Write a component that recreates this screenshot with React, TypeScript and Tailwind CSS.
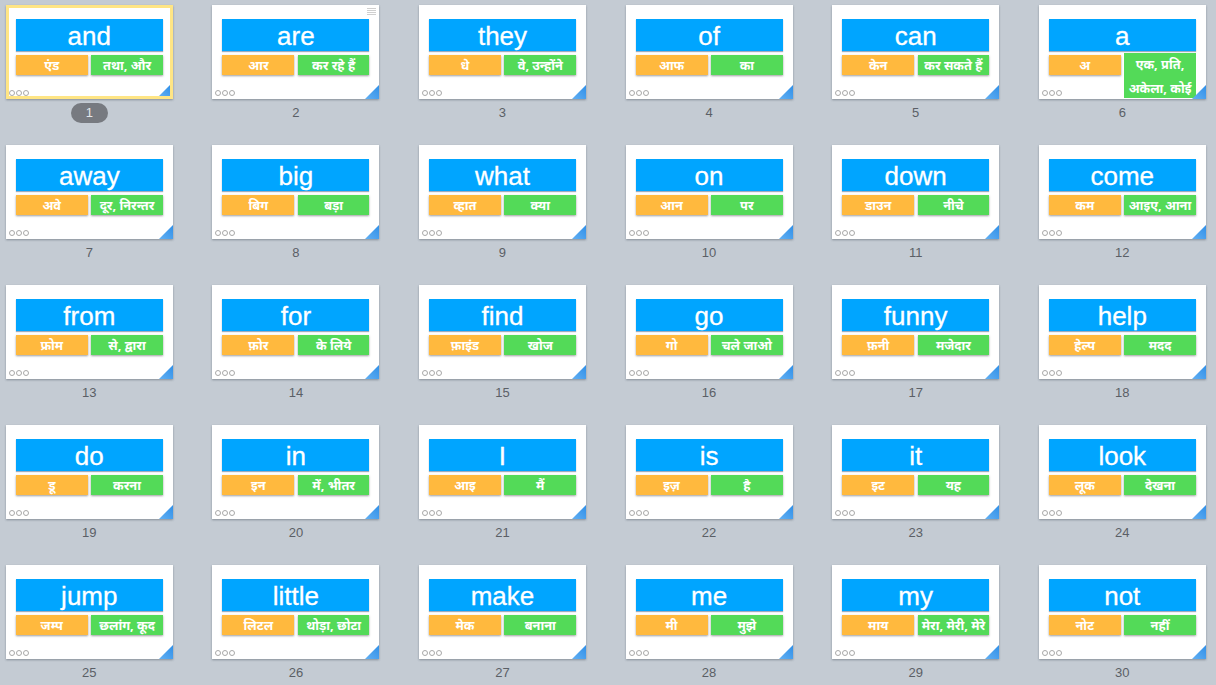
import React from 'react';

type Slide = { en: string; say: string; hi: string };

const slides: Slide[] = [
  { en: 'and', say: 'एंड', hi: 'तथा, और' },
  { en: 'are', say: 'आर', hi: 'कर रहे हैं' },
  { en: 'they', say: 'धे', hi: 'वे, उन्होंने' },
  { en: 'of', say: 'आफ', hi: 'का' },
  { en: 'can', say: 'केन', hi: 'कर सकते हैं' },
  { en: 'a', say: 'अ', hi: 'एक, प्रति, अकेला, कोई' },
  { en: 'away', say: 'अवे', hi: 'दूर, निरन्तर' },
  { en: 'big', say: 'बिग', hi: 'बड़ा' },
  { en: 'what', say: 'व्हात', hi: 'क्या' },
  { en: 'on', say: 'आन', hi: 'पर' },
  { en: 'down', say: 'डाउन', hi: 'नीचे' },
  { en: 'come', say: 'कम', hi: 'आइए, आना' },
  { en: 'from', say: 'फ्रोम', hi: 'से, द्वारा' },
  { en: 'for', say: 'फ़ोर', hi: 'के लिये' },
  { en: 'find', say: 'फ़ाइंड', hi: 'खोज' },
  { en: 'go', say: 'गो', hi: 'चले जाओ' },
  { en: 'funny', say: 'फ़नी', hi: 'मजेदार' },
  { en: 'help', say: 'हेल्प', hi: 'मदद' },
  { en: 'do', say: 'डू', hi: 'करना' },
  { en: 'in', say: 'इन', hi: 'में, भीतर' },
  { en: 'I', say: 'आइ', hi: 'मैं' },
  { en: 'is', say: 'इज़', hi: 'है' },
  { en: 'it', say: 'इट', hi: 'यह' },
  { en: 'look', say: 'लूक', hi: 'देखना' },
  { en: 'jump', say: 'जम्प', hi: 'छलांग, कूद' },
  { en: 'little', say: 'लिटल', hi: 'थोड़ा, छोटा' },
  { en: 'make', say: 'मेक', hi: 'बनाना' },
  { en: 'me', say: 'मी', hi: 'मुझे' },
  { en: 'my', say: 'माय', hi: 'मेरा, मेरी, मेरे' },
  { en: 'not', say: 'नोट', hi: 'नहीं' },
];

const Dots = () => (
  <div className="absolute left-[3px] bottom-[3px] flex gap-[1px]">
    {[0, 1, 2].map(i => (
      <span key={i} className="w-[6px] h-[6px] rounded-full border border-[#a8a8a8]" />
    ))}
  </div>
);

const Corner = ({ selected }: { selected: boolean }) => (
  <svg
    className={selected ? 'absolute right-[3px] bottom-[3px]' : 'absolute right-0 bottom-0'}
    width={selected ? 11 : 14}
    height={selected ? 11 : 14}
    viewBox="0 0 14 14"
  >
    <defs>
      <linearGradient id="corner" x1="0" y1="1" x2="1" y2="0">
        <stop offset="0" stopColor="#63b0f2" />
        <stop offset="1" stopColor="#2f8fe8" />
      </linearGradient>
    </defs>
    <path d="M0 14 L14 0 L14 14 Z" fill="url(#corner)" />
  </svg>
);

const Note = () => (
  <div className="absolute right-[3px] top-[3px] flex flex-col gap-[1px]">
    {[0, 1, 2, 3].map(i => (
      <span key={i} className="block w-[9px] h-[1px] bg-[#cfcfcf]" />
    ))}
  </div>
);

const Card = ({ slide, index }: { slide: Slide; index: number }) => {
  const tall = slide.en === 'a';
  return (
    <div className="flex flex-col items-center w-[167px]">
      <div className="relative w-[167px] h-[94px] bg-white shadow-[0_1px_2px_rgba(60,70,85,0.45)]">
        <div className="px-[10px] pt-[14px] h-full overflow-hidden">
          <div className="h-[32px] bg-[#00a5ff] shadow-[0_1px_1px_rgba(40,70,110,0.45)] flex items-center justify-center text-white text-[26px] font-['Liberation_Sans',sans-serif] leading-none pt-[1px] [-webkit-text-stroke:0.3px_white]">
            {slide.en}
          </div>
          <div className="flex gap-[3.5px] mt-[4px] items-start font-['Noto_Sans','Noto_Sans_Devanagari','Lohit_Devanagari',sans-serif] text-white text-[12.8px] font-bold">
            <div className="w-[72px] h-[20px] bg-[#ffb93e] shadow-[0_1px_2px_rgba(60,60,60,0.5)] flex items-center justify-center leading-none">
              {slide.say}
            </div>
            {tall ? (
              <div className="flex-1 h-[45px] -mt-[2px] bg-[#53da58] flex items-center text-center leading-[24px]">
                {slide.hi}
              </div>
            ) : (
              <div className="flex-1 h-[20px] bg-[#53da58] shadow-[0_1px_2px_rgba(60,60,60,0.5)] flex items-center justify-center leading-none whitespace-nowrap">
                {slide.hi}
              </div>
            )}
          </div>
        </div>
        <Dots />
        <Corner selected={index === 0} />
        {index === 1 && <Note />}
        {index === 0 && (
          <div className="absolute inset-0 border-[3px] border-[#ffe584] pointer-events-none" />
        )}
      </div>
      <div className="mt-[5px] h-[18px] flex items-center justify-center font-['Liberation_Sans',sans-serif] text-[13px] text-[#5b5f66]">
        {index === 0 ? (
          <span className="w-[37px] h-[20px] rounded-full bg-[#777a80] text-[#e4e6e9] flex items-center justify-center">1</span>
        ) : (
          index + 1
        )}
      </div>
    </div>
  );
};

export default function App() {
  return (
    <div className="w-[1216px] h-[685px] overflow-hidden bg-[#c4cbd3]">
      <div className="grid grid-cols-[repeat(6,206.6px)] auto-rows-[140px] pl-[5.8px] pt-[5px]">
        {slides.map((s, i) => (
          <div key={s.en}>
            <Card slide={s} index={i} />
          </div>
        ))}
      </div>
    </div>
  );
}
